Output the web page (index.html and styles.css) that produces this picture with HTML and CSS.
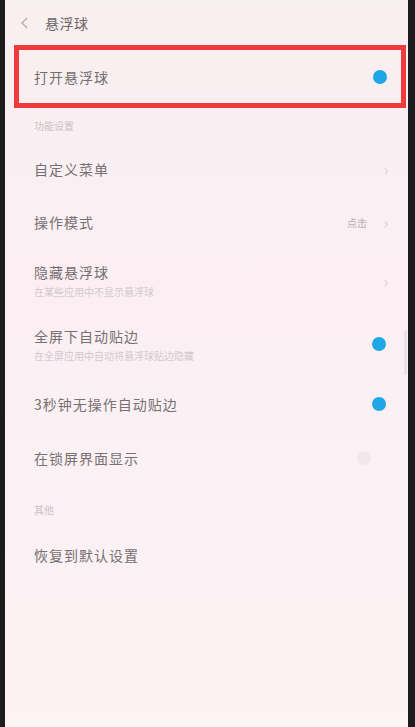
FILE: index.html
```html
<!DOCTYPE html>
<html lang="zh-CN">
<head>
  <meta charset="UTF-8" />
  <meta name="viewport" content="width=device-width, initial-scale=1.0"/>
  <title>悬浮球</title>
  <link rel="stylesheet" href="styles.css">
</head>
<body>

  <div class="phone">
    <!-- Header -->
    <div class="header">
      <svg class="back" width="10" height="14" viewBox="0 0 10 14">
        <path d="M7 2 L2 7 L7 12" fill="none" stroke="#b9aeb3" stroke-width="1.4"/>
      </svg>
      <span class="title">悬浮球</span>
    </div>

    <!-- Main switch -->
    <div class="highlight">
      <div class="row">
        <span class="label">打开悬浮球</span>
        <span class="dot"></span>
      </div>
    </div>

    <div class="section">功能设置</div>

    <div class="row menu">
      <span class="label">自定义菜单</span>
      <span class="chev">›</span>
    </div>

    <div class="row mode">
      <span class="label">操作模式</span>
      <span class="value">点击</span>
      <span class="chev">›</span>
    </div>

    <div class="row two hide">
      <div class="texts">
        <span class="label">隐藏悬浮球</span>
        <span class="sub">在某些应用中不显示悬浮球</span>
      </div>
      <span class="chev">›</span>
    </div>

    <div class="row two full">
      <div class="texts">
        <span class="label">全屏下自动贴边</span>
        <span class="sub">在全屏应用中自动将悬浮球贴边隐藏</span>
      </div>
      <span class="dot"></span>
    </div>

    <div class="row idle">
      <span class="label">3秒钟无操作自动贴边</span>
      <span class="dot"></span>
    </div>

    <div class="row lock">
      <span class="label">在锁屏界面显示</span>
      <span class="dot off"></span>
    </div>

    <div class="section other">其他</div>

    <div class="row reset">
      <span class="label">恢复到默认设置</span>
    </div>

    <div class="scrollbar"></div>
  </div>

</body>
</html>
```

FILE: styles.css
```css
body {
  margin: 0;
  padding: 0;
  background: #1c1c1e;
  font-family: "Noto Sans CJK SC", "Noto Sans", sans-serif;
}

.phone {
  position: relative;
  box-sizing: border-box;
  height: 727px;
  margin: 0 7px 0 5px;
  background: linear-gradient(180deg, #f8eff0 0%, #fbeff4 40%, #fcf3f4 100%);
  overflow: hidden;
}

.header {
  height: 45px;
  display: flex;
  align-items: center;
  padding-left: 15px;
  gap: 15px;
}

.title {
  font-size: 14px;
  color: #6e686a;
  letter-spacing: 0.5px;
}

.highlight {
  margin: 0 2px 0 9px;
  border: 5px solid #ef3b3b;
  height: 53px;
}

.highlight .row {
  height: 53px;
  padding: 0 14px 0 15px;
}

.row {
  display: flex;
  align-items: center;
  padding: 0 22px 0 29px;
}

.label {
  font-size: 14px;
  color: #767072;
  letter-spacing: 1px;
}

.texts {
  display: flex;
  flex-direction: column;
  flex: 1;
}

.sub {
  font-size: 10px;
  color: #d4c8cd;
  margin-top: 2px;
}

.row .label {
  flex: 1;
}

.texts .label {
  flex: none;
}

.section {
  height: 34px;
  display: flex;
  align-items: center;
  padding-left: 29px;
  font-size: 10px;
  color: #cdc1c6;
}

.section.other {
  height: 50px;
}

.menu { height: 53px; }
.mode { height: 54px; }
.hide { height: 63px; }
.full { height: 64px; }
.idle { height: 56px; }
.lock { height: 52px; }
.reset { height: 42px; }

.dot {
  width: 14px;
  height: 14px;
  border-radius: 50%;
  background: #1fa6e6;
}

.dot.off {
  background: #f1e6ea;
  margin-right: 15px;
}

.value {
  font-size: 10px;
  color: #b8aeb2;
  margin-right: 12px;
}

.chev {
  font-size: 16px;
  color: #ddd2d6;
  width: 14px;
  text-align: center;
  margin-right: -7px;
}

.scrollbar {
  position: absolute;
  right: 1px;
  top: 330px;
  width: 3px;
  height: 45px;
  border-radius: 2px;
  background: #ece2e6;
}
```
